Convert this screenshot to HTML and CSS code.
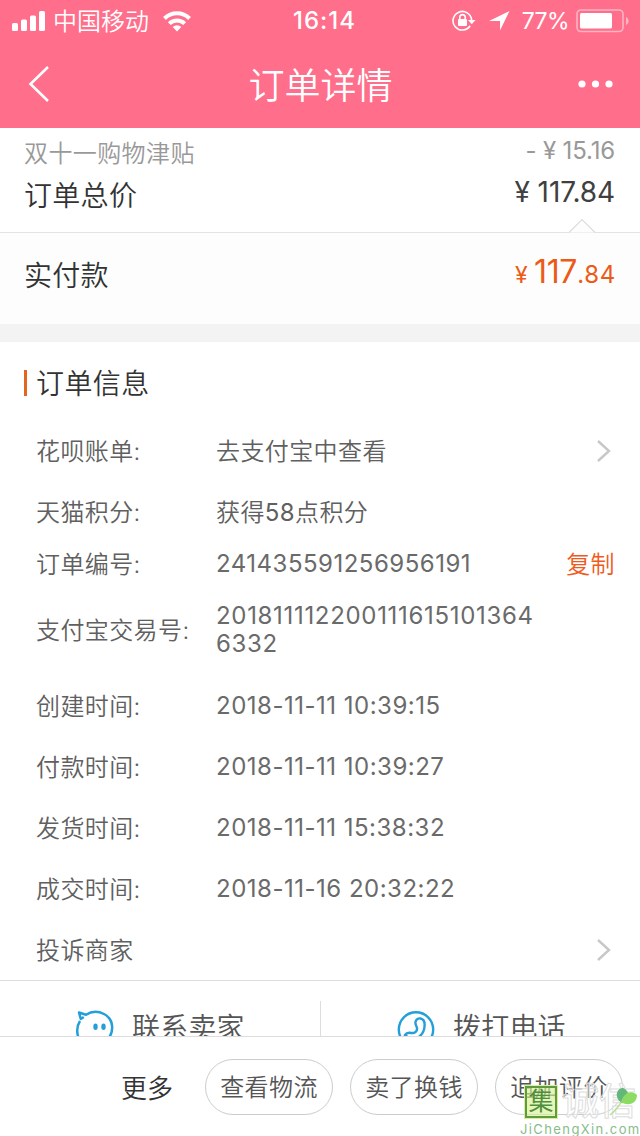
FILE: index.html
```html
<!DOCTYPE html>
<html lang="zh-CN">
<head>
<meta charset="utf-8">
<title>订单详情</title>
<link rel="stylesheet" href="styles.css">
</head>
<body>
<div class="screen">
  <header class="header">
    <div class="status">
      <div class="status-left">
        <svg class="signal" width="34" height="20" viewBox="0 0 34 20" fill="#fff"><rect x="0" y="12" width="6" height="8" rx="1.5"/><rect x="9" y="8.500" width="6" height="11.500" rx="1.500"/><rect x="18" y="4.500" width="6" height="15.500" rx="1.500"/><rect x="27" y="0" width="6" height="20" rx="1.500"/></svg>
        <span class="carrier">中国移动</span>
        <svg class="wifi" width="28" height="21" viewBox="0 0 28 21" fill="none" stroke="#fff" stroke-width="4"><path d="M1.500 7.500a17.700 17.700 0 0 1 25 0"/><path d="M6.300 12.600a11 11 0 0 1 15.400 0"/><path d="M14 20.500l-4.300-4.500a6 6 0 0 1 8.600 0z" fill="#fff" stroke="none"/></svg>
      </div>
      <div class="clock">16:14</div>
      <div class="status-right">
        <svg class="lock" width="24" height="22" viewBox="0 0 24 22" fill="none" stroke="#fff" stroke-width="1.600"><path d="M18.200 15.700A9.300 9.300 0 1 1 19.600 10"/><path d="M16 10h7.500l-3.800 4.200z" fill="#fff" stroke="none"/><rect x="6" y="9" width="9" height="7" rx="1" fill="#fff" stroke="none"/><path d="M7.800 9.500V7.300a2.700 2.700 0 0 1 5.400 0v2.200"/></svg>
        <svg class="locate" width="21" height="20" viewBox="0 0 21 20"><path d="M20.500 0L0 10h11v9.500z" fill="#fff"/></svg>
        <span class="percent">77%</span>
        <svg class="battery" width="54" height="24" viewBox="0 0 54 24"><rect x="1" y="1" width="46" height="21.500" rx="4" fill="none" stroke="#ffb4c4" stroke-width="1.600"/><rect x="4" y="4" width="32" height="15.500" rx="1.500" fill="#fff"/><path d="M50 8c3.500 1.500 3.500 6.500 0 8z" fill="#ffb4c4"/></svg>
      </div>
    </div>
    <div class="nav">
      <svg class="back" width="36" height="38" viewBox="0 0 36 38"><path d="M21 2L3.500 19 21 36" fill="none" stroke="#fff" stroke-width="2.600"/></svg>
      <h1 class="title">订单详情</h1>
      <svg class="dots" width="36" height="8" viewBox="0 0 36 8" fill="#fff"><circle cx="4" cy="4" r="3.600"/><circle cx="17.500" cy="4" r="3.600"/><circle cx="31" cy="4" r="3.600"/></svg>
    </div>
  </header>

  <main class="content">
    <section class="totals">
      <div class="line subsidy"><span>双十一购物津贴</span><span class="amount amount-small">- ¥ 15.16</span></div>
      <div class="line total"><span>订单总价</span><span class="amount amount-total">¥ 117.84</span></div>
      <svg class="notch" width="28" height="15" viewBox="0 0 28 15"><path d="M1 14.500L14 1.500 27 14.500" fill="#fdfdfd" stroke="#ddd" stroke-width="1.200"/></svg>
    </section>
    <section class="paid">
      <span>实付款</span>
      <span class="paid-amount"><span class="yen">¥</span><span class="whole">117</span><span class="cents">.84</span></span>
    </section>

    <section class="info">
      <h2 class="info-title">订单信息</h2>
      <div class="row"><span class="label">花呗账单:</span><span class="value">去支付宝中查看</span><svg class="chevron" width="16" height="24" viewBox="0 0 16 24"><path d="M2 2l11 10L2 22" fill="none" stroke="#c7c7c7" stroke-width="2.400"/></svg></div>
      <div class="row row-62"><span class="label">天猫积分:</span><span class="value">获得<span class="points">58</span>点积分</span></div>
      <div class="row row-42"><span class="label">订单编号:</span><span class="value order-no">241435591256956191</span><span class="copy">复制</span></div>
      <div class="row row-90"><span class="label">支付宝交易号:</span><span class="value trade-no">201811112200111615101364<br>6332</span></div>
      <div class="row row-62"><span class="label">创建时间:</span><span class="value date">2018-11-11 10:39:15</span></div>
      <div class="row"><span class="label">付款时间:</span><span class="value date">2018-11-11 10:39:27</span></div>
      <div class="row row-62"><span class="label">发货时间:</span><span class="value date">2018-11-11 15:38:32</span></div>
      <div class="row"><span class="label">成交时间:</span><span class="value date">2018-11-16 20:32:22</span></div>
      <div class="row row-62"><span class="label">投诉商家</span><span class="value"></span><svg class="chevron" width="16" height="24" viewBox="0 0 16 24"><path d="M2 2l11 10L2 22" fill="none" stroke="#c7c7c7" stroke-width="2.400"/></svg></div>
    </section>

    <section class="contact">
      <div class="contact-item">
        <svg width="40" height="40" viewBox="0 0 40 40" fill="none" stroke="#249fda" stroke-width="2.500" stroke-linejoin="round"><path d="M5 11C1 17 1 27 7 32a18 18 0 0 0 24-1c9-8 8-22-2-27-6-3-13-2.500-18 .8L4 2.500l1.800 6.500 3-2"/><g fill="#249fda" stroke="none"><ellipse cx="20.500" cy="16.800" rx="2.200" ry="3.300"/><ellipse cx="28.500" cy="16.800" rx="2.200" ry="3.300"/></g></svg>
        <span>联系卖家</span>
      </div>
      <div class="contact-item">
        <svg width="40" height="40" viewBox="0 0 40 40" fill="none" stroke="#249fda" stroke-width="2.400"><circle cx="20" cy="19.500" r="17.200"/><path d="M9 25c2-3 4-2.500 6-2 4 .5 6.500-2 6-5-.3-2-2-3-1.500-6 .5-3 3-4 5-3.500 3.500.8 4.500 4 4 8C28 24 22 30 14 29z"/></svg>
        <span>拨打电话</span>
      </div>
    </section>
  </main>

  <footer class="footer">
    <span class="more">更多</span>
    <span class="pill">查看物流</span>
    <span class="pill">卖了换钱</span>
    <span class="pill">追加评价</span>
  </footer>

  <div class="watermark">
    <div class="mark-top">
      <span class="mark-seal">集</span>
      <span class="mark-name">诚信</span>
      <svg class="leaf" width="30" height="30" viewBox="0 0 30 30"><path d="M2 28C7 24 11 20 14 13" fill="none" stroke="#b8df8c" stroke-width="1.500"/><path d="M14 16C5 10 9 1 15 1c7 3 7 10-1 15z" fill="#63b77a"/><path d="M13 15c3-10 11-12 16-7 0 8-8 12-16 7z" fill="#8cdc63"/></svg>
    </div>
    <div class="mark-url">JiChengXin.com</div>
  </div>
</div>
</body>
</html>
```
FILE: styles.css
```css
* { box-sizing: border-box; }
body { margin: 0; background: #fff; }
.screen {
  position: relative;
  width: 640px;
  height: 1136px;
  display: flex;
  flex-direction: column;
  overflow: hidden;
  font-family: Inter, "Noto Sans CJK SC", sans-serif;
  font-weight: 350;
  color: #333;
  white-space: nowrap;
}
svg { display: block; flex: none; }

.header { height: 128px; flex: none; background: #ff6e8a; color: #fff; }
.status { height: 40px; display: grid; grid-template-columns: 1fr auto 1fr; align-items: center; padding: 0 10px 0 12px; }
.status-left { display: flex; align-items: center; }
.carrier { margin-left: 7px; font-size: 24px; line-height: 40px; padding-top: 2px; }
.wifi { margin-left: 14px; }
.clock { width: 66px; margin-right: -10px; font-size: 24px; font-weight: 500; letter-spacing: 1px; line-height: 42px; }
.status-right { display: flex; align-items: center; justify-content: flex-end; }
.lock { margin-right: 1px; }
.locate { margin-left: 12px; }
.percent { margin: 0 7px 0 12px; font-size: 23px; font-weight: 400; letter-spacing: -0.6px; line-height: 42px; }
.nav { height: 88px; display: flex; align-items: center; justify-content: space-between; padding: 0 26px 0 27px; }
.title { margin: 0; padding: 4px 0 0; font-size: 36px; font-weight: 350; line-height: 84px; }

.content { height: 908px; flex: none; overflow: hidden; }
.totals { position: relative; height: 105px; padding: 5px 25px 0 24px; border-bottom: 1px solid #e3e3e3; }
.line { display: flex; justify-content: space-between; height: 42px; align-items: center; }
.subsidy { color: #999; font-size: 24px; letter-spacing: 0.4px; line-height: 40px; }
.total { font-size: 28px; letter-spacing: 0.3px; line-height: 40px; }
.amount { font-weight: 400; }
.amount-small { font-size: 24px; letter-spacing: -0.15px; padding-bottom: 7px; }
.amount-total { color: #404040; font-size: 28px; letter-spacing: -0.1px; padding-bottom: 8px; }
.notch { position: absolute; right: 44px; bottom: -1px; }
.paid { height: 109px; display: flex; justify-content: space-between; align-items: flex-start; padding: 0 25px 0 24px; font-size: 28px; letter-spacing: 0.2px; line-height: 86px; background: #fdfdfd; border-bottom: 18px solid #f3f3f3; }
.paid-amount { display: flex; align-items: baseline; color: #ec5a17; font-weight: 400; line-height: 78px; }
.yen { font-size: 23px; margin-right: 6px; }
.whole { font-size: 32px; letter-spacing: -0.3px; }
.cents { font-size: 24px; letter-spacing: 0.7px; margin-right: -1px; }

.info { height: 640px; margin-top: -1px; padding: 1px 25px 0 36px; border-bottom: 1px solid #ddd; }
.info-title { display: flex; align-items: center; height: 79px; margin: 0; padding-top: 6px; font-size: 28px; font-weight: 350; letter-spacing: 0.4px; line-height: 73px; }
.info-title::before { content: ""; width: 3px; height: 26px; margin: -3px 9px 0 -12px; background: #e2661e; }
.row { display: grid; grid-template-columns: 180px 1fr auto; align-items: center; height: 60px; color: #606060; font-size: 24px; letter-spacing: 0.4px; line-height: 36px; }
.row-62 { height: 62px; }
.row-42 { height: 42px; }
.row-90 { height: 90px; }
.label, .copy { padding-top: 2px; }
.row > .value { padding-top: 2px; }
.row > .order-no, .row > .date, .row > .trade-no { padding-top: 0; font-weight: 400; color: #6a6a6a; }
.points { font-weight: 400; }
.order-no { letter-spacing: 0.5px; }
.trade-no { letter-spacing: 0.68px; line-height: 28px; }
.date { letter-spacing: 0.5px; }
.chevron { margin-right: 3px; }
.copy { color: #f05a1c; }

.contact { display: grid; grid-template-columns: 1fr 1fr; height: 90px; padding-top: 20px; color: #555; font-size: 28px; letter-spacing: 0.2px; }
.contact-item { display: flex; align-items: flex-start; height: 70px; padding: 9px 0 0 75px; line-height: 34px; }
.contact-item + .contact-item { border-left: 1px solid #ddd; }
.contact-item span { margin-left: 17px; padding-top: 1px; }

.footer { height: 100px; flex: none; display: flex; align-items: center; justify-content: flex-end; gap: 17px; padding: 0 17px 0 0; border-top: 1px solid #ddd; background: #fff; }
.more { font-size: 26px; margin-right: 15px; }
.pill { width: 128px; height: 56px; border: 1px solid #ccc; border-radius: 28px; font-size: 24px; letter-spacing: 0.4px; line-height: 56px; text-align: center; color: #555; }

.watermark { position: absolute; left: 520px; top: 1086px; width: 124px; height: 50px; }
.mark-top { position: relative; display: flex; height: 35px; padding-left: 5px; }
.mark-seal { width: 32px; height: 32px; border: 2px solid #5f9a3f; outline: 1px solid #d9ef9e; background: rgba(215, 241, 150, 0.65); color: #4f8f3e; font-size: 25px; font-weight: 400; line-height: 27px; text-align: center; }
.mark-name { margin-left: 5px; font-size: 37px; font-weight: 500; line-height: 32px; color: rgba(255, 255, 255, 0.5); -webkit-text-stroke: 1px #ddd; }
.leaf { position: absolute; left: 88px; top: 1px; }
.mark-url { font-size: 13px; font-weight: 400; line-height: 16px; letter-spacing: 1.400px; color: #86bd8a; }
```
